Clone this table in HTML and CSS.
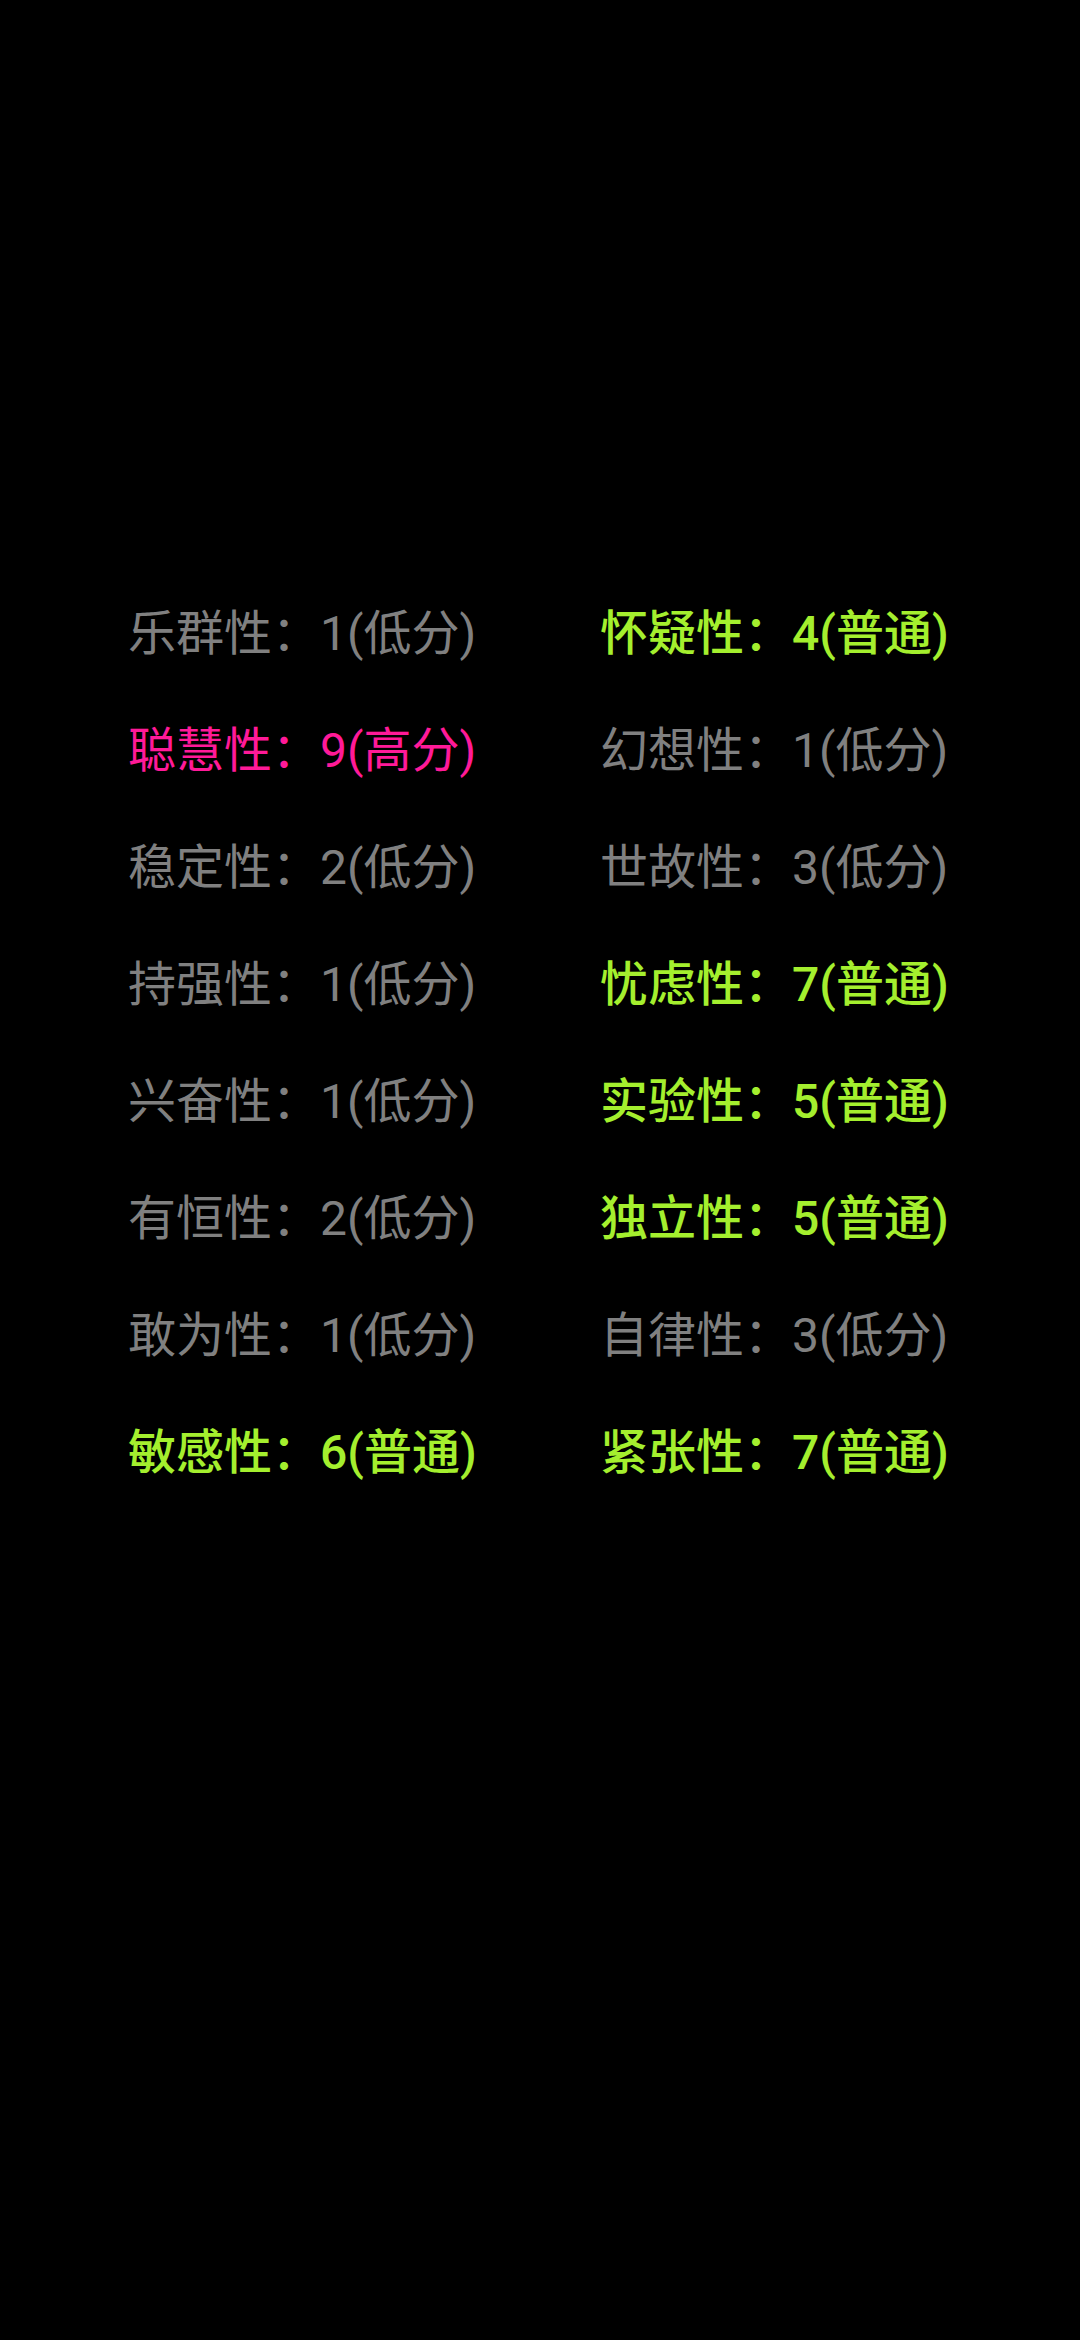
FILE: index.html
```html
<!DOCTYPE html>
<html lang="zh-CN">
<head>
<meta charset="utf-8">
<link rel="stylesheet" href="styles.css">
</head>
<body>
<div class="grid">
  <div class="item low">乐群性：1(低分)</div>
  <div class="item mid">怀疑性：4(普通)</div>
  <div class="item high">聪慧性：9(高分)</div>
  <div class="item low">幻想性：1(低分)</div>
  <div class="item low">稳定性：2(低分)</div>
  <div class="item low">世故性：3(低分)</div>
  <div class="item low">持强性：1(低分)</div>
  <div class="item mid">忧虑性：7(普通)</div>
  <div class="item low">兴奋性：1(低分)</div>
  <div class="item mid">实验性：5(普通)</div>
  <div class="item low">有恒性：2(低分)</div>
  <div class="item mid">独立性：5(普通)</div>
  <div class="item low">敢为性：1(低分)</div>
  <div class="item low">自律性：3(低分)</div>
  <div class="item mid">敏感性：6(普通)</div>
  <div class="item mid">紧张性：7(普通)</div>
</div>
</body>
</html>
```
FILE: styles.css
```css
html, body {
  margin: 0;
  padding: 0;
  background: #000;
}
body {
  width: 1080px;
  height: 2340px;
  font-family: Roboto, "Noto Sans CJK SC", sans-serif;
}
.grid {
  display: grid;
  grid-template-columns: 472px 472px;
  padding: 575px 0 0 128px;
}
.item {
  font-size: 48px;
  line-height: 117px;
  height: 117px;
  white-space: nowrap;
}
.low {
  color: #808080;
}
.mid {
  color: #a4ef2e;
  font-weight: 500;
}
.high {
  color: #ff1a98;
}
```
